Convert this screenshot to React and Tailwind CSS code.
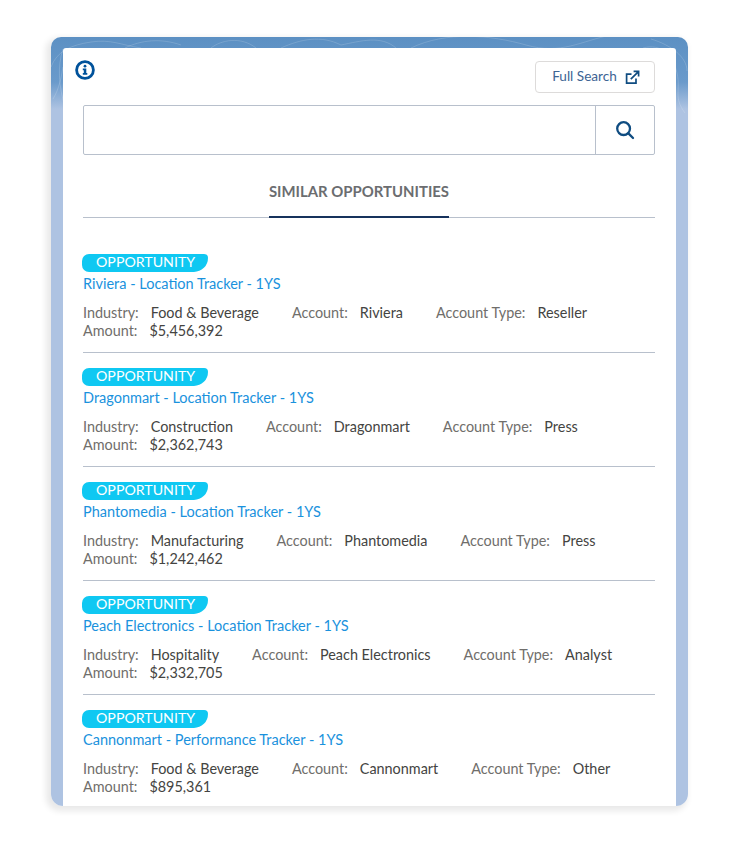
import React from 'react';

const opportunities = [
  { name: 'Riviera - Location Tracker - 1YS', industry: 'Food & Beverage', account: 'Riviera', type: 'Reseller', amount: '$5,456,392' },
  { name: 'Dragonmart - Location Tracker - 1YS', industry: 'Construction', account: 'Dragonmart', type: 'Press', amount: '$2,362,743' },
  { name: 'Phantomedia - Location Tracker - 1YS', industry: 'Manufacturing', account: 'Phantomedia', type: 'Press', amount: '$1,242,462' },
  { name: 'Peach Electronics - Location Tracker - 1YS', industry: 'Hospitality', account: 'Peach Electronics', type: 'Analyst', amount: '$2,332,705' },
  { name: 'Cannonmart - Performance Tracker - 1YS', industry: 'Food & Beverage', account: 'Cannonmart', type: 'Other', amount: '$895,361' },
];

const Field = ({ label, value }) => (
  <span className="mr-[33px] inline-flex gap-[12px]">
    <span className="text-[#706e6b]">{label}</span>
    <span className="text-[#444442]">{value}</span>
  </span>
);

const TopoLines = () => (
  <svg className="absolute inset-x-0 top-0 h-[90px] w-full" viewBox="0 0 637 90" fill="none" stroke="#ffffff" strokeOpacity="0.16" strokeWidth="1" preserveAspectRatio="none">
    <path d="M0 30C6 14 20 8 40 5S70 8 90 11" />
    <path d="M14 70C8 50 6 30 12 12" />
    <path d="M2 62C8 52 10 42 12 30" />
    <path d="M74 11C90 3 110 1 130 8" />
    <path d="M160 11C170 3 190 -1 205 11" />
    <path d="M230 11C250 2 270 -2 290 8 310 4 330 -2 345 11" />
    <path d="M360 11C395 -6 440 -2 475 8S530 4 560 -2" />
    <path d="M592 11C610 6 622 18 626 36S622 60 634 76" />
    <path d="M600 2C620 8 636 20 636 34" />
  </svg>
);

const Opportunity = ({ item, last }) => (
  <div className={`h-[114px] pt-[15px] ${last ? '' : 'border-b border-[#b8c0cc]'}`}>
    <div className="-ml-px flex h-[18px] w-[126px] items-center rounded-l-[9px] rounded-tr-[5px] rounded-br-[18px] bg-[#0fc8f2] pb-[1px] pl-[14px] text-[14.2px] leading-none text-white">
      OPPORTUNITY
    </div>
    <div className="mt-[2px] text-[14.5px] leading-[20px] text-[#1a92dd]">{item.name}</div>
    <div className="mt-[10px] text-[14.4px] leading-[18px]">
      <div className="whitespace-nowrap">
        <Field label="Industry:" value={item.industry} />
        <Field label="Account:" value={item.account} />
        <Field label="Account Type:" value={item.type} />
      </div>
      <Field label="Amount:" value={item.amount} />
    </div>
  </div>
);

export default function App() {
  return (
    <div className="min-h-[856px] bg-white pt-[37px] pl-[51px] font-['Lato','Open_Sans',sans-serif]">
      <div className="relative h-[769px] w-[637px] overflow-hidden rounded-[10px] rounded-b-[12px] bg-[linear-gradient(#5c90c3,#6a9acb_45px,#aec3e2_72px)] px-[12px] pt-[11px] shadow-[-3px_3px_6px_2px_rgba(0,0,0,0.09)]">
        <TopoLines />
        <div className="relative h-[758px] overflow-hidden rounded-t-[3px] bg-white pr-[21px] pl-[20px]">
          {/* Header */}
          <div className="flex h-[57px] items-start justify-between pt-[13px]">
            <svg className="-mt-[1px] -ml-[8px]" width="20" height="20" viewBox="0 0 20 20">
              <circle cx="10" cy="10" r="8.4" fill="none" stroke="#00529b" strokeWidth="2.8" />
              <circle cx="10" cy="6.2" r="1.4" fill="#00529b" />
              <path d="M7.8 8.6h3.5v4.500h1v1.600H7.800v-1.600h1V10.200h-1z" fill="#00529b" />
            </svg>
            <button className="flex h-[32px] w-[120px] items-center justify-center gap-[8px] rounded-[4px] border border-[#dddbda] bg-white pl-[2px] text-[13.6px] text-[#3d6494]">
              <span className="-mt-[2px]">Full Search</span>
              <svg width="15" height="15" viewBox="0 0 15 15" fill="none" stroke="#0f4c81" strokeWidth="1.7">
                <path d="M11 8.5V13.2H1.6V4.2H6.5" />
                <path d="M5.800 9.200L13.200 1.800M8.600 1.400h5v5" />
              </svg>
            </button>
          </div>

          {/* Search */}
          <div className="flex h-[50px] rounded-[2px] border border-[#b8c0cc]">
            <input className="min-w-0 flex-1 outline-none" />
            <button className="flex w-[59px] items-center justify-center border-l border-[#b8c0cc]">
              <svg width="20" height="20" viewBox="0 0 20 20" fill="none" stroke="#0f4c81" strokeWidth="2.3" strokeLinecap="round">
                <circle cx="8.600" cy="8.600" r="6.400" />
                <path d="M13.400 13.400L18 18" />
              </svg>
            </button>
          </div>

          {/* Tab */}
          <div className="mt-[12px] flex h-[51px] justify-center border-b border-[#b8c0cc] pr-[20px]">
            <div className="flex h-[51px] w-[180px] items-center justify-center whitespace-nowrap border-b-2 border-[#16325c] text-[14.9px] font-bold text-[#6b6d70]">
              SIMILAR OPPORTUNITIES
            </div>
          </div>

          {/* Results */}
          <div className="pt-[21px]">
            {opportunities.map((item, i) => (
              <Opportunity key={item.name} item={item} last={i === opportunities.length - 1} />
            ))}
          </div>
        </div>
      </div>
    </div>
  );
}
